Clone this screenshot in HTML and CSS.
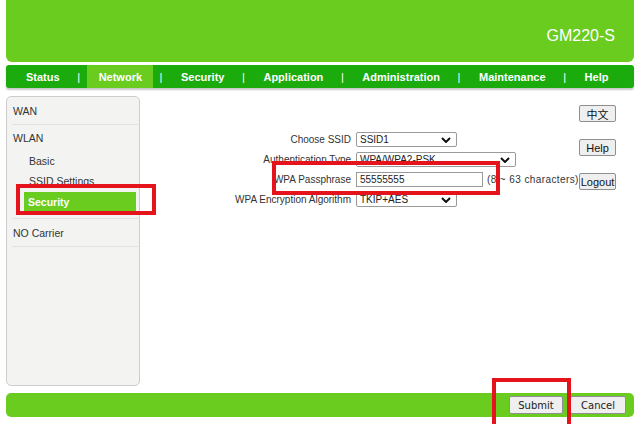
FILE: index.html
```html
<!DOCTYPE html>
<html>
<head>
<meta charset="utf-8">
<link rel="stylesheet" href="styles.css">
</head>
<body>
<header class="top">
  <div class="model">GM220-S</div>
</header>
<nav class="menu">
  <span class="tab">Status</span><span class="sep">|</span>
  <span class="tab active">Network</span><span class="sep">|</span>
  <span class="tab">Security</span><span class="sep">|</span>
  <span class="tab">Application</span><span class="sep">|</span>
  <span class="tab">Administration</span><span class="sep">|</span>
  <span class="tab">Maintenance</span><span class="sep">|</span>
  <span class="tab">Help</span>
</nav>
<div class="main">
  <aside class="side">
    <div class="group">
      <div class="item head">WAN</div>
    </div>
    <div class="group">
      <div class="item head wlan">WLAN</div>
      <div class="item sub">Basic</div>
      <div class="item sub">SSID Settings</div>
      <div class="item sub selected">Security</div>
    </div>
    <div class="group">
      <div class="item head">NO Carrier</div>
    </div>
  </aside>
  <section class="content">
    <div class="form">
      <div class="label">Choose SSID</div>
      <div class="ctrl"><div class="select w101"><span>SSID1</span><svg class="chev" viewBox="0 0 10 6" width="10" height="6"><polyline points="1,1 5,5 9,1" /></svg></div></div>
      <div class="label">Authentication Type</div>
      <div class="ctrl"><div class="select w160"><span>WPA/WPA2-PSK</span><svg class="chev" viewBox="0 0 10 6" width="10" height="6"><polyline points="1,1 5,5 9,1" /></svg></div></div>
      <div class="label">WPA Passphrase</div>
      <div class="ctrl"><div class="input">55555555</div><span class="note">(8 ~ 63 characters)</span></div>
      <div class="label">WPA Encryption Algorithm</div>
      <div class="ctrl"><div class="select w101"><span>TKIP+AES</span><svg class="chev" viewBox="0 0 10 6" width="10" height="6"><polyline points="1,1 5,5 9,1" /></svg></div></div>
    </div>
    <div class="tools">
      <button class="btn">中文</button>
      <button class="btn">Help</button>
      <button class="btn">Logout</button>
    </div>
  </section>
</div>
<footer class="bar">
  <button class="btn act">Submit</button>
  <button class="btn act cancel">Cancel</button>
</footer>
<div class="mark m1"></div>
<div class="mark m2"></div>
<div class="mark m3"></div>
</body>
</html>
```
FILE: styles.css
```css
html, body {
  margin: 0;
  padding: 0;
  height: 424px;
  overflow: hidden;
}
body {
  position: relative;
  padding: 0 6px;
  background: #fff;
  font-family: "Liberation Sans", Arial, sans-serif;
  color: #333;
}
.top {
  height: 62px;
  background: #6acc1f;
  border-radius: 0 0 6px 6px;
  display: flex;
  justify-content: flex-end;
  align-items: flex-start;
  padding: 27px 19px 0 0;
  box-sizing: border-box;
}
.model {
  color: #fff;
  font-size: 16px;
  line-height: 18px;
}
.menu {
  margin-top: 3px;
  height: 23px;
  background: #1cab0d;
  border-radius: 3px;
  display: flex;
  align-items: stretch;
  padding-left: 8px;
  box-shadow: 0 2px 2px rgba(0,0,0,0.22);
  font-size: 11px;
  font-weight: bold;
  color: #fff;
}
.tab {
  display: flex;
  align-items: center;
  padding: 0 11px 0 12px;
}
.tab.active {
  background: #6acc1f;
}
.sep {
  display: flex;
  align-items: center;
  justify-content: center;
  width: 16px;
  font-weight: normal;
}
.main {
  display: flex;
  margin-top: 8px;
}
.side {
  width: 134px;
  height: 290px;
  box-sizing: border-box;
  background: #f3f4f2;
  border: 1px solid #cdcdcd;
  border-radius: 5px;
  font-size: 10.5px;
}
.group {
  margin-left: 5px;
  margin-right: 1px;
  border-bottom: 1px solid #e1e3e1;
}
.item {
  display: flex;
  align-items: center;
}
.head {
  height: 27px;
  padding-left: 1px;
}
.wlan {
  height: 26px;
}
.sub {
  height: 20px;
  padding-left: 17px;
}
.selected {
  margin: 1px 2px 7px 12px;
  height: 19px;
  padding-left: 4px;
  background: #6acc1f;
  color: #fff;
  font-weight: bold;
}
.content {
  flex: 1;
  display: flex;
  justify-content: space-between;
  align-items: flex-start;
}
.form {
  margin: 36px 0 0 89px;
  display: grid;
  grid-template-columns: 122px auto;
  column-gap: 5px;
  row-gap: 5px;
  align-items: center;
  font-size: 10px;
}
.label {
  text-align: right;
  white-space: nowrap;
}
.ctrl {
  display: flex;
  align-items: center;
  white-space: nowrap;
}
.select {
  height: 15px;
  box-sizing: border-box;
  border: 1px solid #9a9a9a;
  border-radius: 2px;
  background: #fff;
  display: flex;
  align-items: center;
  justify-content: space-between;
  padding: 0 5px 0 3px;
  color: #222;
}
.w101 { width: 101px; }
.w160 { width: 160px; }
.chev polyline {
  fill: none;
  stroke: #111;
  stroke-width: 2;
}
.input {
  width: 127px;
  height: 15px;
  box-sizing: border-box;
  border: 1px solid #9a9a9a;
  background: #fff;
  padding-left: 3px;
  display: flex;
  align-items: center;
  color: #222;
}
.note {
  margin-left: 4px;
  letter-spacing: 0.4px;
}
.tools {
  width: 37px;
  margin: 9px 18px 0 0;
  display: flex;
  flex-direction: column;
  gap: 17px;
}
.btn {
  width: 37px;
  height: 17px;
  padding: 0;
  box-sizing: border-box;
  border: 1px solid #8f8f8f;
  border-radius: 2px;
  background: #efefef;
  font-family: "Liberation Sans", "Noto Sans CJK SC", sans-serif;
  font-size: 11px;
  color: #111;
}
.bar {
  margin-top: 7px;
  height: 24px;
  background: #6acc1f;
  border-radius: 5px;
  display: flex;
  justify-content: flex-end;
  align-items: center;
  padding-right: 8px;
  gap: 7px;
}
.act {
  width: 54px;
  height: 18px;
  font-family: "DejaVu Sans", sans-serif;
  font-size: 10px;
  color: #222;
}
.cancel {
  width: 56px;
}
.mark {
  position: absolute;
  box-sizing: border-box;
  border: 4px solid #e5141c;
}
.m1 { left: 272px; top: 161px; width: 228px; height: 34px; }
.m2 { left: 16px; top: 184px; width: 140px; height: 31px; }
.m3 { left: 492px; top: 378px; width: 79px; height: 60px; }
```
